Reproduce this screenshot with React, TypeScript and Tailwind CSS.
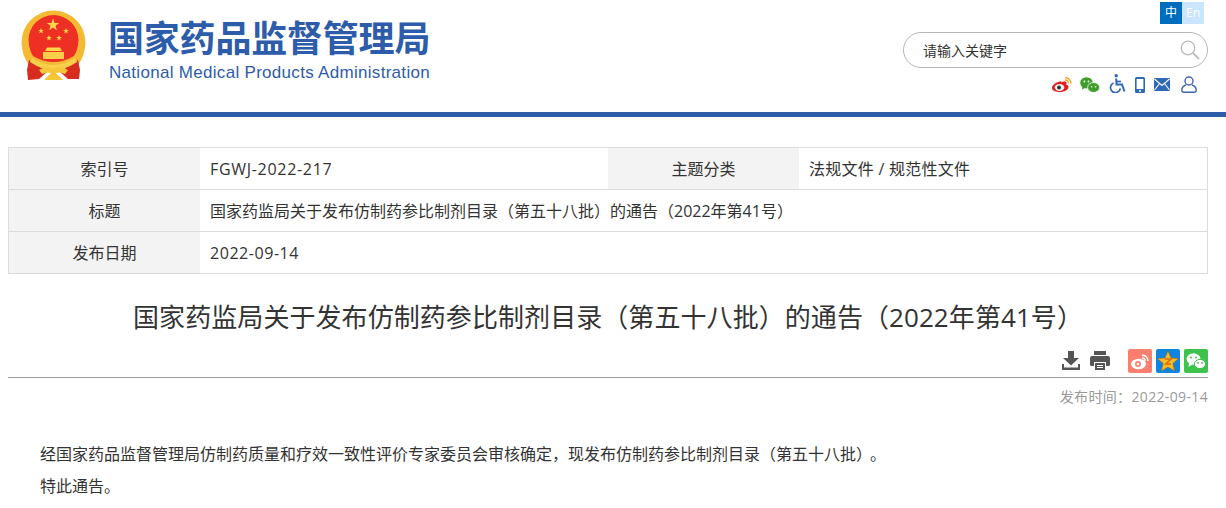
const CJK = "font-['Open_Sans','Noto_Sans_CJK_SC',sans-serif]";

function Emblem() {
  const star = (cx: number, cy: number, r: number, fill = "#fbd84a") => {
    const pts = Array.from({ length: 10 }, (_, i) => {
      const a = (Math.PI / 5) * i - Math.PI / 2;
      const rr = i % 2 ? r * 0.4 : r;
      return `${cx + rr * Math.cos(a)},${cy + rr * Math.sin(a)}`;
    }).join(" ");
    return <polygon points={pts} fill={fill} />;
  };
  return (
    <svg width="68" height="72" viewBox="0 0 68 72" className="shrink-0">
      <path d="M1.5 32.5 A32 32 0 0 1 65.5 32.5 Q65 46 58 55 Q33.5 68 9 55 Q2 46 1.5 32.5 Z" fill="#f2bb33" />
      <path d="M8.5 30 A25 25 0 0 1 58.5 30 Q58 40 54 46 Q33.5 58 13 46 Q9 40 8.5 30 Z" fill="#ee3024" />
      {star(33, 15, 6.5)}
      {star(21, 21, 3)}
      {star(46, 21, 3)}
      {star(29, 28, 3)}
      {star(39, 28, 3)}
      <path d="M25 41 L27 37.5 L40 37.5 L42 41 Z" fill="#fbd84a" />
      <rect x="23" y="42" width="21" height="7" fill="#f8cf49" />
      <path d="M9 50 L7 60 L8 70 L19 69 L27 62 L20 57 Z" fill="#d72c1e" />
      <path d="M58 50 L60 60 L59 69 L48 69 L40 62 L47 57 Z" fill="#d72c1e" />
      <path d="M12 48 Q33.5 62 55 48 L57 52 Q33.5 68 10 52 Z" fill="#f7cf4b" />
      <path d="M19 60 Q27 55 33.5 59 Q40 55 48 60 L45 64 L40 62.5 L36 63 L43 70 L24 70 L31 63 L27 62.5 L22 64 Z" fill="#f4c638" />
    </svg>
  );
}

function SearchIcon() {
  return (
    <svg width="20" height="20" viewBox="0 0 20 20" fill="none" stroke="#bdbdbd" strokeWidth="1.3">
      <circle cx="8" cy="8" r="6.8" />
      <path d="M13 13 L19 19" strokeWidth="1.8" />
    </svg>
  );
}

function TopIcons() {
  return (
    <div className="flex items-end h-[20px] pr-[18px] justify-end">
      <svg width="20" height="17" viewBox="0 0 20 16" className="mr-[8px]">
        <path d="M8 5 C3 6 0 9 0 11.5 C0 14.2 4 15.5 8 15.5 C13 15.5 16.5 13 16.5 10.5 C16.5 8.8 15 8.3 14.3 8 C15 6.5 14.6 5 12.8 5 C11.5 5 10 5.5 9.5 6 C9.8 4.8 9 4.6 8 5 Z" fill="#df1f1f" />
        <ellipse cx="7.5" cy="11" rx="4.8" ry="3.4" fill="#f3f3f3" />
        <circle cx="7" cy="11" r="2" fill="#333" />
        <path d="M13 1 A6 6 0 0 1 19 7 M13 3.5 A3.5 3.5 0 0 1 16.5 7" fill="none" stroke="#f0a51e" strokeWidth="1.4" />
      </svg>
      <svg width="20" height="16" viewBox="0 0 20 16" className="mr-[9px]">
        <ellipse cx="6.5" cy="5.8" rx="6.3" ry="5.6" fill="#3f9e2b" />
        <path d="M2.5 9 L2 12.5 L6 10.5 Z" fill="#3f9e2b" />
        <ellipse cx="13.6" cy="10.5" rx="6" ry="5" fill="#3f9e2b" stroke="#fff" strokeWidth=".8" />
        <circle cx="4.4" cy="4.5" r=".9" fill="#fff" />
        <circle cx="8.5" cy="4.5" r=".9" fill="#fff" />
        <circle cx="11.6" cy="9.8" r=".8" fill="#fff" />
        <circle cx="15.6" cy="9.8" r=".8" fill="#fff" />
      </svg>
      <svg width="17" height="19" viewBox="0 0 17 19" className="mr-[9px]" fill="none" stroke="#2f68b4" strokeWidth="1.7">
        <circle cx="7.2" cy="1.8" r="1.7" fill="#2f68b4" stroke="none" />
        <path d="M7.2 4.5 L7.5 10.5 L13 10.5 L15.5 17.5" strokeWidth="2" />
        <path d="M7.5 7.5 L12 7.5" />
        <path d="M4.6 9 A5 5 0 1 0 11.4 14.5" />
      </svg>
      <svg width="10" height="16" viewBox="0 0 10 16" className="mr-[9px]">
        <rect x="0" y="0" width="10" height="16" rx="1.5" fill="#2f68b4" />
        <rect x="1.6" y="2" width="6.8" height="10" fill="#fff" />
        <circle cx="5" cy="14" r="1" fill="#fff" />
      </svg>
      <svg width="16" height="13" viewBox="0 0 16 13" className="mr-[11px] mb-[2px]">
        <rect width="16" height="13" rx="1" fill="#2f68b4" />
        <path d="M0.5 1 L8 7.5 L15.5 1 M0.5 12 L5.5 5.5 M15.5 12 L10.5 5.5" fill="none" stroke="#fff" strokeWidth="1.1" />
      </svg>
      <svg width="16" height="17" viewBox="0 0 16 17" fill="none" stroke="#3f66ad" strokeWidth="1.4">
        <circle cx="8" cy="5" r="4" />
        <path d="M5 9 C2 10 .8 12 .8 14 C.8 15.6 1.8 16.2 3 16.2 L13 16.2 C14.2 16.2 15.2 15.6 15.2 14 C15.2 12 14 10 11 9" />
      </svg>
    </div>
  );
}

function Row({ children, last }: { children: React.ReactNode; last?: boolean }) {
  return <div className={`flex ${last ? "h-[41px]" : "h-[42px] border-b border-[#dcdcdc]"}`}>{children}</div>;
}

function Label({ text, w }: { text: string; w: string }) {
  return (
    <div className={`${w} shrink-0 bg-[#f3f3f3] flex items-center justify-center text-[16px] text-[#333]`}>{text}</div>
  );
}

function Value({ text, grow, extra = "" }: { text: string; grow?: boolean; extra?: string }) {
  return (
    <div className={`${grow ? "flex-1" : "w-[408px]"} ${extra} pl-[10px] flex items-center text-[16px] text-[#333]`}>{text}</div>
  );
}

export default function App() {
  return (
    <div className={`w-[1226px] h-[508px] overflow-hidden bg-white ${CJK}`}>
      <header className="h-[112px] flex justify-between">
        <div className="flex pl-[20px] pt-[10px]">
          <Emblem />
          <div className="ml-[20px] pt-[8px]">
            <div className="text-[36px] leading-[42px] font-bold text-[#2d5caa] whitespace-nowrap w-[324px] tracking-[-0.2px]">
              国家药品监督管理局
            </div>
            <div className="mt-[3px] ml-[1px] text-[17px] leading-[20px] text-[#2d5caa] whitespace-nowrap font-['Liberation_Sans',sans-serif] tracking-[0.3px]">
              National Medical Products Administration
            </div>
          </div>
        </div>
        <div className="w-[305px] mr-[18px] flex flex-col">
          <div className="flex justify-end pr-[4px] pt-[2px]">
            <span className="w-[22px] h-[22px] bg-[#006cbe] text-white text-[12px] flex items-center justify-center">中</span>
            <span className="w-[22px] h-[22px] bg-[#cbe5ff] text-white text-[12px] flex items-center justify-center">En</span>
          </div>
          <div className="mt-[8px] h-[36px] rounded-[18px] border border-[#b5b5b5] flex items-center justify-between pl-[19px] pr-[7px] text-[#333] text-[14px]">
            <span className="pt-[1px]">请输入关键字</span>
            <SearchIcon />
          </div>
          <div className="mt-[5px] -mr-[7px]">
            <TopIcons />
          </div>
        </div>
      </header>
      <div className="h-[5px] bg-[#2d5caa]" />
      <div className="ml-[8px] mt-[30px] w-[1200px] border border-[#dcdcdc]">
        <Row>
          <Label text="索引号" w="w-[191px]" />
          <Value text="FGWJ-2022-217" extra="tracking-[0.7px]" />
          <Label text="主题分类" w="w-[191px]" />
          <Value text="法规文件 / 规范性文件" grow extra="tracking-[0.25px]" />
        </Row>
        <Row>
          <Label text="标题" w="w-[191px]" />
          <Value text="国家药监局关于发布仿制药参比制剂目录（第五十八批）的通告（2022年第41号）" grow />
        </Row>
        <Row last>
          <Label text="发布日期" w="w-[191px]" />
          <Value text="2022-09-14" grow extra="tracking-[0.55px]" />
        </Row>
      </div>
      <h1 className="mt-[25px] ml-[8px] w-[1200px] text-center text-[26px] leading-[36px] text-[#333] font-normal whitespace-nowrap tracking-[0.07px]">
        国家药监局关于发布仿制药参比制剂目录（第五十八批）的通告（2022年第41号）
      </h1>
      <div className="ml-[8px] w-[1200px] h-[29px] mt-[14px] border-b border-[#999] flex justify-end items-start">
        <svg width="18" height="19" viewBox="0 0 18 19" className="mt-[2px] mr-[10px]" fill="#555">
          <path d="M6 0 H12 V7 H17 L9 14.5 L1 7 H6 Z" />
          <path d="M0 13 H2 V16.5 H16 V13 H18 V19 H0 Z" />
        </svg>
        <svg width="20" height="19" viewBox="0 0 20 19" className="mt-[2px] mr-[18px]" fill="#555">
          <path d="M4 0 H16 V4 H4 Z" />
          <path d="M2 5 H18 Q20 5 20 7 V14 Q20 15 18 15 H16 V11 H4 V15 H2 Q0 15 0 14 V7 Q0 5 2 5 Z" />
          <path d="M5 12 H15 V19 H5 Z" />
          <rect x="7" y="14" width="6" height="1" fill="#fff" />
          <rect x="7" y="16" width="6" height="1" fill="#fff" />
        </svg>
        <svg width="24" height="24" viewBox="0 0 24 24" className="mr-[4px]">
          <rect width="24" height="24" rx="2" fill="#fb7f6f" />
          <ellipse cx="10.5" cy="15" rx="7.5" ry="5.3" fill="#fff" />
          <circle cx="10" cy="15" r="3" fill="#fb7f6f" />
          <circle cx="10" cy="15" r="1.3" fill="#fff" />
          <path d="M14 6 A6 6 0 0 1 20 12 M14 9 A3 3 0 0 1 17 12" fill="none" stroke="#fff" strokeWidth="1.5" />
        </svg>
        <svg width="24" height="24" viewBox="0 0 24 24" className="mr-[4px]">
          <rect width="24" height="24" rx="2" fill="#0f84e0" />
          <polygon points="12,2 15,9 22.5,9.6 16.8,14.4 18.6,22 12,18 5.4,22 7.2,14.4 1.5,9.6 9,9" fill="#f7bd23" stroke="#a76a14" strokeWidth=".6" />
          <path d="M9 10 H15 L10 15 H15" fill="none" stroke="#d96f14" strokeWidth="1.6" />
        </svg>
        <svg width="24" height="24" viewBox="0 0 24 24">
          <rect width="24" height="24" rx="2" fill="#3dc24b" />
          <ellipse cx="9.5" cy="10" rx="7" ry="5.8" fill="#fff" />
          <path d="M5 14 L4.5 18 L9 15 Z" fill="#fff" />
          <ellipse cx="16" cy="15" rx="5.6" ry="4.6" fill="#fff" stroke="#3dc24b" />
          <circle cx="7" cy="8.5" r="1" fill="#3dc24b" />
          <circle cx="12" cy="8.5" r="1" fill="#3dc24b" />
          <circle cx="14" cy="14" r=".9" fill="#3dc24b" />
          <circle cx="18" cy="14" r=".9" fill="#3dc24b" />
        </svg>
      </div>
      <div className="ml-[8px] w-[1200px] mt-[9px] text-right text-[14px] leading-[20px] text-[#999] tracking-[0.35px]">发布时间：2022-09-14</div>
      <div className="mt-[31px] pl-[40px] text-[16px] leading-[32px] text-[#333] whitespace-nowrap">
        <p>经国家药品监督管理局仿制药质量和疗效一致性评价专家委员会审核确定，现发布仿制药参比制剂目录（第五十八批）<span className="ml-[6px]">。</span></p>
        <p>特此通告。</p>
      </div>
    </div>
  );
}
